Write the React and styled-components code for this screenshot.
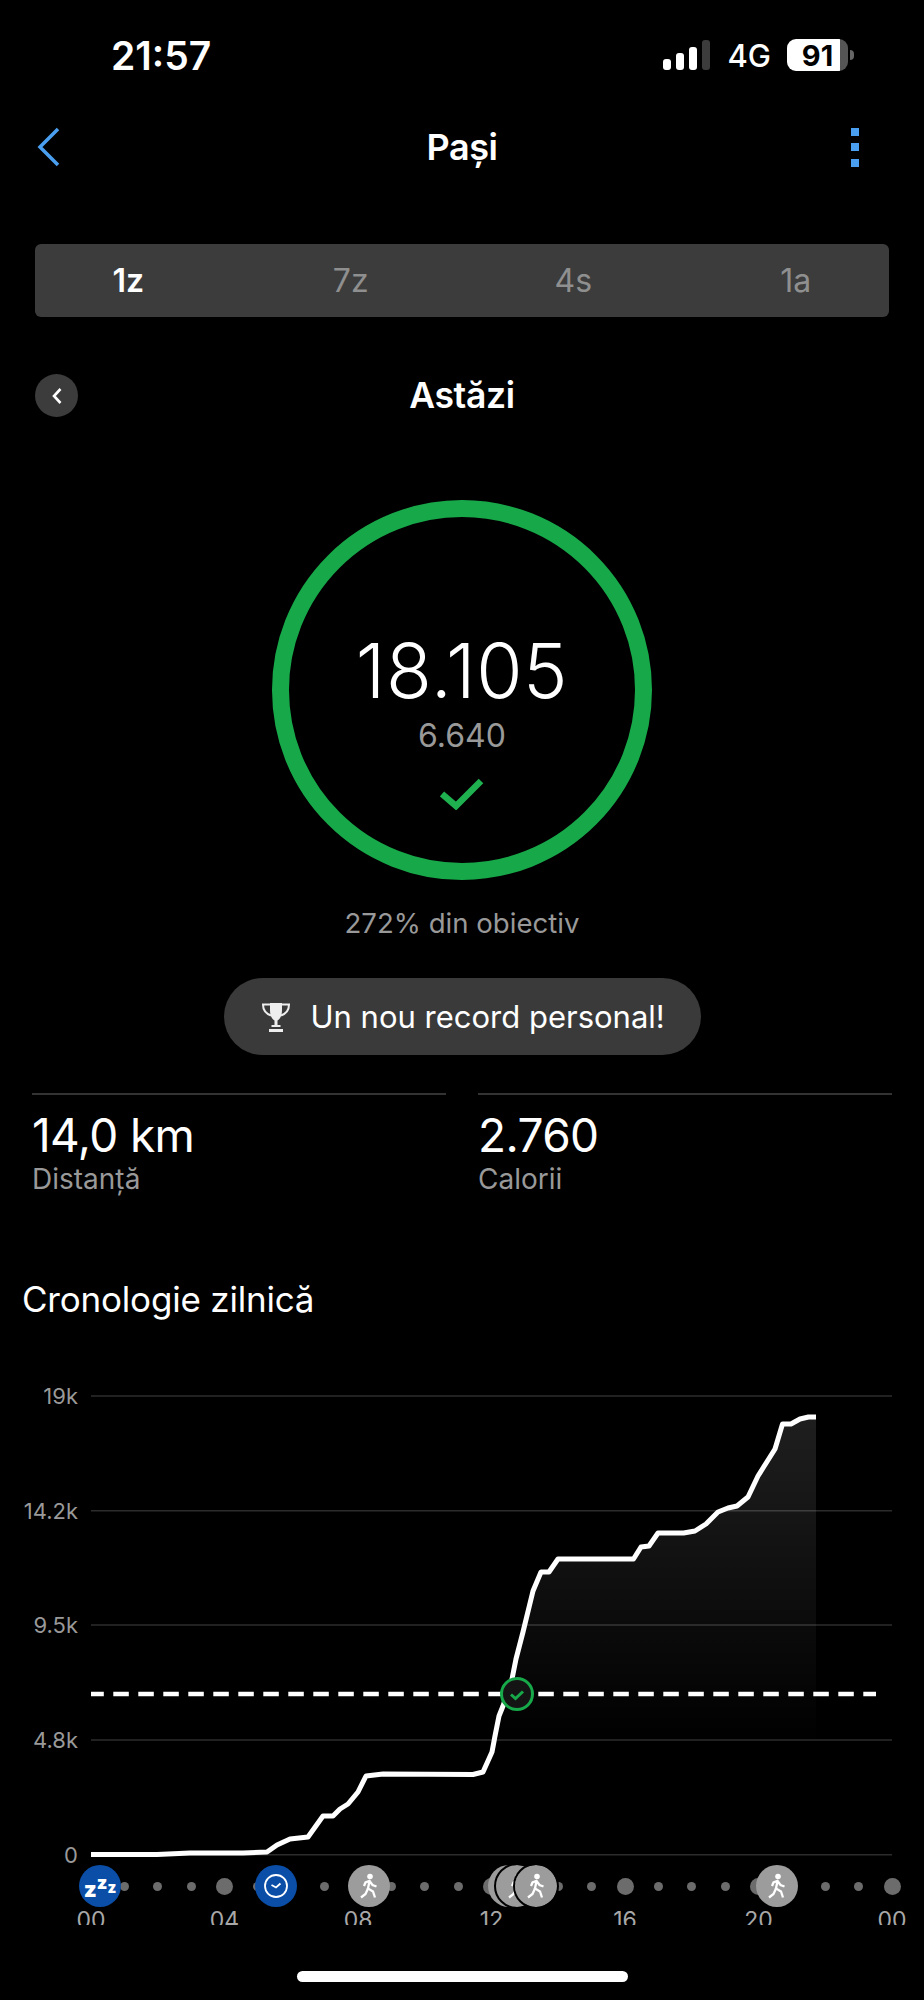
import React from "react";
import styled, { createGlobalStyle } from "styled-components";

const GlobalStyle = createGlobalStyle`
  html, body {
    margin: 0;
    padding: 0;
    background: #000;
  }
  body {
    font-family: Inter, "Liberation Sans", sans-serif;
    color: #fff;
  }
`;

const Page = styled.div`
  width: 924px;
  height: 2000px;
  background: #000;
  overflow: hidden;
  display: flex;
  flex-direction: column;
`;

// Barra de estado
const StatusBar = styled.div`
  height: 52px;
  padding: 29px 76px 0 111px;
  display: flex;
  align-items: center;
  justify-content: space-between;
`;

const Clock = styled.span`
  font-size: 39px;
  font-weight: 600;
`;

const StatusRight = styled.div`
  display: flex;
  align-items: center;
  gap: 16px;
`;

const Network = styled.span`
  font-size: 31px;
  font-weight: 500;
`;

const Battery = styled.div`
  width: 61px;
  height: 32px;
  border-radius: 9px;
  background: linear-gradient(90deg, #fff 87%, #555 87%);
  color: #000;
  font-size: 29px;
  font-weight: 700;
  display: flex;
  align-items: center;
  justify-content: center;
  position: relative;
  &::after {
    content: "";
    position: absolute;
    right: -6px;
    top: 11px;
    width: 4px;
    height: 10px;
    border-radius: 0 4px 4px 0;
    background: #666;
  }
`;

const NavBar = styled.div`
  margin-top: 44px;
  height: 44px;
  padding: 0 37px;
  display: grid;
  grid-template-columns: 1fr auto 1fr;
  align-items: center;
`;

const NavTitle = styled.h1`
  margin: 0;
  font-size: 36px;
  font-weight: 600;
  letter-spacing: -0.4px;
`;

const MenuDots = styled.div`
  justify-self: end;
  margin-right: 28px;
  display: flex;
  flex-direction: column;
  gap: 7.5px;
`;

const MenuDot = styled.span`
  width: 8px;
  height: 8px;
  background: #4b9ff0;
`;

const Tabs = styled.div`
  margin: 75px 35px 0;
  height: 73px;
  background: #3c3c3c;
  border-radius: 6px;
  display: grid;
  grid-template-columns: repeat(4, 222.5px);
  justify-content: center;
  align-items: center;
`;

const Tab = styled.span`
  text-align: center;
  font-size: 32px;
  font-weight: ${(p) => (p.$active ? 600 : 400)};
  color: ${(p) => (p.$active ? "#fff" : "#8f8f8f")};
`;

const DayRow = styled.div`
  margin-top: 57px;
  height: 43px;
  padding: 0 35px;
  display: flex;
  align-items: center;
  position: relative;
  justify-content: center;
`;

const RoundBack = styled.div`
  position: absolute;
  left: 35px;
  top: 0;
  width: 43px;
  height: 43px;
  border-radius: 50%;
  background: #3c3c3c;
  display: flex;
  align-items: center;
  justify-content: center;
`;

const DayTitle = styled.h2`
  margin: 0;
  font-size: 35.5px;
  font-weight: 600;
  letter-spacing: -0.3px;
`;

// Inelul cu pasi
const Ring = styled.div`
  box-sizing: border-box;
  margin: 83px auto 0;
  width: 380px;
  height: 380px;
  border: 17px solid #17a849;
  border-radius: 50%;
  display: flex;
  flex-direction: column;
  align-items: center;
  padding-top: 111px;
`;

const Steps = styled.div`
  font-size: 75px;
  line-height: 86px;
  font-weight: 300;
  letter-spacing: 0.6px;
`;

const Goal = styled.div`
  font-size: 32px;
  line-height: 36px;
  color: #999;
  margin-top: 4px;
`;

const RingCheck = styled.svg`
  margin-top: 24px;
  display: block;
`;

const Percent = styled.div`
  margin-top: 26px;
  text-align: center;
  font-size: 27.6px;
  line-height: 34px;
  color: #999;
`;

const RecordPill = styled.div`
  box-sizing: border-box;
  margin: 38px auto 0;
  width: 477px;
  height: 77px;
  border-radius: 39px;
  background: #3a3a3a;
  display: flex;
  align-items: center;
  padding-left: 37px;
  gap: 20px;
  font-size: 31px;
`;

const Stats = styled.div`
  margin: 38px 32px 0;
  display: grid;
  grid-template-columns: 414px 414px;
  justify-content: space-between;
`;

const Stat = styled.div`
  border-top: 2px solid #333;
  padding-top: 13px;
`;

const StatValue = styled.div`
  font-size: 46px;
  line-height: 54px;
  letter-spacing: -0.6px;
`;

const StatLabel = styled.div`
  font-size: 28px;
  line-height: 34px;
  color: #999;
`;

const SectionTitle = styled.h3`
  margin: 81px 0 0 22px;
  font-size: 35px;
  line-height: 44px;
  font-weight: 400;
  letter-spacing: -0.2px;
`;

const ChartSvg = styled.svg`
  display: block;
  margin-top: 58px;
`;

const AxisLabel = styled.text`
  font-family: Inter, "Liberation Sans", sans-serif;
  font-size: 22px;
  fill: #999;
  text-anchor: end;
`;

// Linia de timp de sub grafic
const Timeline = styled.div`
  position: relative;
  margin: 0 0 0 91px;
  width: 801px;
  height: 42px;
  display: flex;
  align-items: center;
  justify-content: space-between;
`;

const DotSlot = styled.div`
  width: 0;
  display: flex;
  justify-content: center;
`;

const Dot = styled.span`
  flex: none;
  width: ${(p) => (p.$big ? 17 : 9)}px;
  height: ${(p) => (p.$big ? 17 : 9)}px;
  border-radius: 50%;
  background: #6c6c6c;
`;

const Marker = styled.div`
  box-sizing: content-box;
  position: absolute;
  top: -2px;
  width: 42px;
  height: 42px;
  border-radius: 50%;
  background: ${(p) => (p.$blue ? "#0a4ea8" : "#9c9c9c")};
  border: 2px solid ${(p) => (p.$outlined ? "#000" : "transparent")};
  background-clip: padding-box;
  display: flex;
  align-items: center;
  justify-content: center;
  color: #fff;
`;

const SleepZ = styled.span`
  font-weight: 900;
  font-size: ${(p) => p.$size}px;
  line-height: 1;
  margin-top: ${(p) => p.$top}px;
`;

const Hours = styled.div`
  box-sizing: border-box;
  margin: 4px 0 0 51px;
  width: 881px;
  height: 14px;
  padding: 0 40px;
  overflow: hidden;
  display: flex;
  justify-content: space-between;
`;

const Hour = styled.span`
  width: 0;
  display: flex;
  justify-content: center;
  font-size: 23px;
  line-height: 19px;
  color: #a8a8a8;
`;

const HomeBar = styled.div`
  margin: 46px auto 0;
  width: 331px;
  height: 11px;
  border-radius: 6px;
  background: #fff;
`;

const CURVE = [
  [91, 1855.5], [157, 1855.5], [190, 1854], [243, 1854], [267, 1853], [277, 1846], [290, 1840],
  [308, 1838], [323, 1817], [333, 1817], [340, 1810], [348, 1805], [358, 1793], [366, 1777],
  [383, 1775], [473, 1775.5], [483, 1773], [492, 1753], [495, 1737], [499, 1717], [503, 1707],
  [512, 1680], [516, 1660], [523, 1633], [533, 1592],
  [541, 1573], [549, 1573], [558, 1560], [633.5, 1560], [641, 1548], [649, 1547], [658, 1534],
  [683.6, 1534], [695, 1532], [706, 1525], [718, 1513], [728, 1509], [737, 1507], [748, 1498],
  [758, 1477], [775, 1450], [782.5, 1425], [791, 1425], [800, 1420], [808.5, 1418], [816, 1418],
];

// El svg empieza en y=1380 de la captura
const CHART_TOP = 1380;
const linePoints = CURVE.map(([x, y]) => `${x},${y - CHART_TOP}`).join(" ");
const areaPoints = `${linePoints} 816,${1856 - CHART_TOP} 91,${1856 - CHART_TOP}`;

const AXIS = [
  { label: "19k", y: 1397 },
  { label: "14.2k", y: 1511.7 },
  { label: "9.5k", y: 1626 },
  { label: "4.8k", y: 1741 },
  { label: "0", y: 1855.7 },
];

const BIG_DOTS = [0, 4, 8, 12, 16, 20, 24];
const HOURS = ["00", "04", "08", "12", "16", "20", "00"];
const TRACK_LEFT = 91;

const Chart = () => (
  <ChartSvg width="924" height="486" viewBox="0 0 924 486">
    <defs>
      <linearGradient id="areaFill" x1="0" y1="0" x2="0" y2="1">
        <stop offset="0" stopColor="#fff" stopOpacity="0.12" />
        <stop offset="0.75" stopColor="#fff" stopOpacity="0" />
      </linearGradient>
    </defs>
    {AXIS.map((a) => (
      <g key={a.label}>
        <line x1="91" x2="892" y1={a.y - CHART_TOP} y2={a.y - CHART_TOP} stroke="#2c2c2c" strokeWidth="1.5" />
        <AxisLabel x="78" y={a.y - CHART_TOP + 8}>{a.label}</AxisLabel>
      </g>
    ))}
    <polygon points={areaPoints} fill="url(#areaFill)" />
    <line x1="91" x2="876" y1="315" y2="315" stroke="#fff" strokeWidth="4.7" strokeDasharray="15.5 9.5" strokeDashoffset="2.7" />
    <polyline points={linePoints} fill="none" stroke="#fff" strokeWidth="5" strokeLinejoin="round" />
    <circle cx="517" cy="315" r="15.5" fill="#141414" stroke="#17a849" strokeWidth="3" />
    <path d="M511 315.5l4.5 4 7.5-7" fill="none" stroke="#17a849" strokeWidth="3" />
  </ChartSvg>
);

const WalkIcon = () => (
  <svg width="22" height="26" viewBox="0 0 22 26" fill="none" stroke="#fff" strokeWidth="2.3">
    <circle cx="12" cy="3.5" r="2.8" fill="#fff" stroke="none" />
    <path d="M11.5 8L10 15.5l5 3 2 6" />
    <path d="M10 15.5L7.5 21 3 24.5" />
    <path d="M6 13l1.5-3.5 4-1.5 3 4 4 1.5" />
  </svg>
);

const WalkMarker = ({ x, outlined }) => (
  <Marker $outlined={outlined} style={{ left: x - TRACK_LEFT - 23 }}>
    <WalkIcon />
  </Marker>
);

export default function App() {
  return (
    <Page>
      <GlobalStyle />
      <StatusBar>
        <Clock>21:57</Clock>
        <StatusRight>
          <svg width="48" height="32" viewBox="0 0 48 32">
            <rect x="0" y="20" width="8" height="11" rx="3" fill="#fff" />
            <rect x="13" y="14" width="8" height="17" rx="3" fill="#fff" />
            <rect x="26" y="8" width="8" height="23" rx="3" fill="#fff" />
            <rect x="39" y="1" width="8" height="30" rx="3" fill="#3c3c3c" />
          </svg>
          <Network>4G</Network>
          <Battery>91</Battery>
        </StatusRight>
      </StatusBar>

      <NavBar>
        <svg width="24" height="40" viewBox="0 0 24 40">
          <path d="M21 2L3 20l18 18" fill="none" stroke="#4b9ff0" strokeWidth="3.5" />
        </svg>
        <NavTitle>Pași</NavTitle>
        <MenuDots>
          <MenuDot />
          <MenuDot />
          <MenuDot />
        </MenuDots>
      </NavBar>

      <Tabs>
        <Tab $active>1z</Tab>
        <Tab>7z</Tab>
        <Tab>4s</Tab>
        <Tab>1a</Tab>
      </Tabs>

      <DayRow>
        <RoundBack>
          <svg width="12" height="18" viewBox="0 0 12 18">
            <path d="M9.5 2L3 9l6.5 7" fill="none" stroke="#fff" strokeWidth="2.6" />
          </svg>
        </RoundBack>
        <DayTitle>Astăzi</DayTitle>
      </DayRow>

      <Ring>
        <Steps>18.105</Steps>
        <Goal>6.640</Goal>
        <RingCheck width="44" height="32" viewBox="0 0 44 32">
          <path d="M2 16l14 12L41 3" fill="none" stroke="#1fb14f" strokeWidth="6.5" />
        </RingCheck>
      </Ring>

      <Percent>272% din obiectiv</Percent>

      <RecordPill>
        <svg width="30" height="30" viewBox="0 0 30 30">
          <path d="M9 1h12v7c0 6-2 9-4.5 10.500V23h3v2h-9v-2h3v-4.500C11 17 9 14 9 8z" fill="#eee" />
          <path d="M9 2.5H2c0 6 2.500 9 8 11M21 2.500h7c0 6-2.500 9-8 11" fill="none" stroke="#eee" strokeWidth="2" />
          <rect x="8" y="27" width="14" height="3" fill="#eee" />
        </svg>
        Un nou record personal!
      </RecordPill>

      <Stats>
        <Stat>
          <StatValue>14,0 km</StatValue>
          <StatLabel>Distanță</StatLabel>
        </Stat>
        <Stat>
          <StatValue>2.760</StatValue>
          <StatLabel>Calorii</StatLabel>
        </Stat>
      </Stats>

      <SectionTitle>Cronologie zilnică</SectionTitle>

      <Chart />

      <Timeline>
        {Array.from({ length: 25 }, (_, i) => (
          <DotSlot key={i}>
            <Dot $big={BIG_DOTS.includes(i)} />
          </DotSlot>
        ))}
        <Marker $blue style={{ left: 100 - TRACK_LEFT - 23 }}>
          <SleepZ $size={22} $top={5}>z</SleepZ>
          <SleepZ $size={18} $top={-7}>z</SleepZ>
          <SleepZ $size={15} $top={3}>z</SleepZ>
        </Marker>
        <Marker $blue style={{ left: 276 - TRACK_LEFT - 23 }}>
          <svg width="26" height="26" viewBox="0 0 26 26">
            <circle cx="13" cy="13" r="11" fill="none" stroke="#fff" strokeWidth="1.8" />
            <path d="M8.5 12l4.500 2.500 4.500-4" fill="none" stroke="#fff" strokeWidth="1.8" />
          </svg>
        </Marker>
        <WalkMarker x={369} />
        <WalkMarker x={509} />
        <WalkMarker x={517} outlined />
        <WalkMarker x={536} outlined />
        <WalkMarker x={777} />
      </Timeline>

      <Hours>
        {HOURS.map((h, i) => (
          <Hour key={i}>{h}</Hour>
        ))}
      </Hours>

      <HomeBar />
    </Page>
  );
}
